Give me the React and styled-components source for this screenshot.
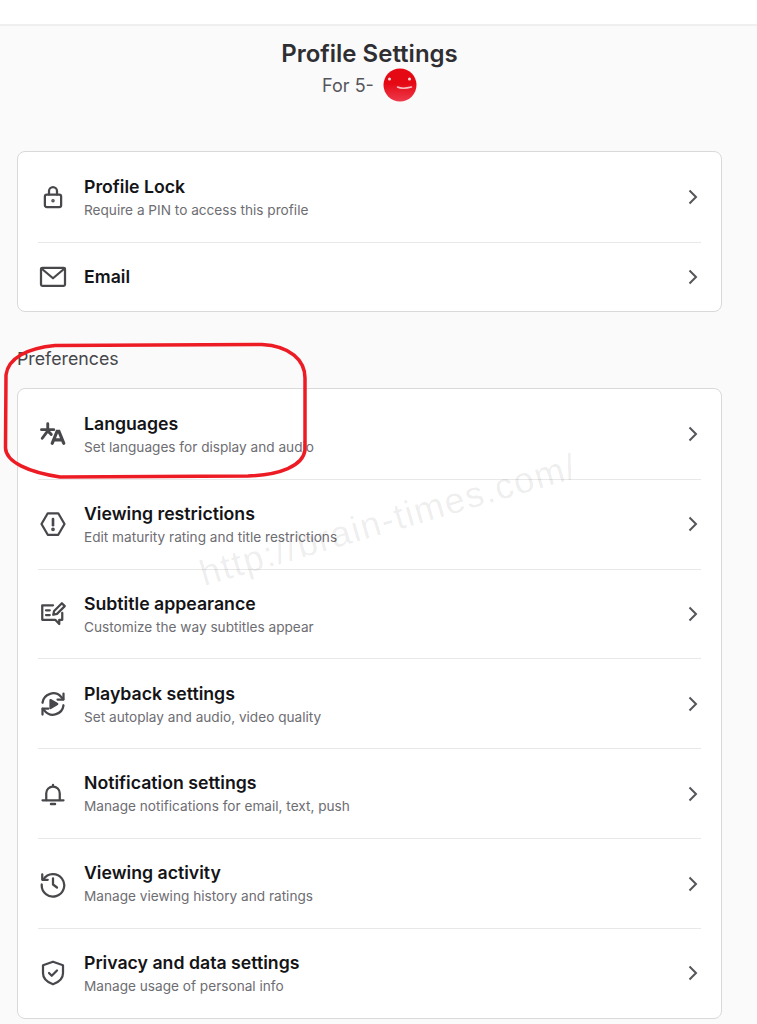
import styled, { createGlobalStyle } from "styled-components"

const GlobalStyle = createGlobalStyle`
  html, body {
    margin: 0;
    padding: 0;
    background: #fafafa;
  }
  body {
    font-family: Inter, "Liberation Sans", sans-serif;
  }
`

const Page = styled.div`
  position: relative;
  width: 757px;
  height: 1024px;
  overflow: hidden;
  background: #fafafa;
`

const TopBar = styled.div`
  height: 24px;
  background: #fff;
  border-bottom: 2px solid #efefef;
`

const Content = styled.main`
  width: 705px;
  margin-left: 17px;
`

const Header = styled.header`
  display: flex;
  flex-direction: column;
  align-items: center;
  padding-top: 12px;
  margin-bottom: 50px;
`

const Title = styled.h1`
  margin: 0;
  font-size: 24px;
  line-height: 32px;
  font-weight: 600;
  color: #2f2f33;
`

const ProfileLine = styled.div`
  display: flex;
  align-items: center;
  gap: 9px;
  height: 30px;
  margin-bottom: 1px;
  font-size: 18px;
  color: #55555a;
`

const Card = styled.section`
  background: #fff;
  border: 1px solid #d9d9d9;
  border-radius: 8px;
  padding: 0 20px;
  margin-bottom: ${(p) => p.$gap || 0}px;
`

const SectionLabel = styled.h2`
  margin: 0 0 17px;
  font-size: 17.800px;
  line-height: 23px;
  padding-bottom: 1px;
  font-weight: 400;
  color: #47474b;
`

const Row = styled.div`
  display: flex;
  align-items: center;
  height: ${(p) => p.$height || 89.83}px;
  box-sizing: border-box;
  border-top: ${(p) => (p.$first ? "none" : "1px solid #e8e8e8")};
`

const IconSlot = styled.div`
  width: 46px;
  flex: none;
  display: flex;
  color: #48484c;
`

const Text = styled.div`
  flex: 1;
  min-width: 0;
  margin-top: ${(p) => (p.$single ? -1 : 0.5)}px;
`

const RowTitle = styled.div`
  font-size: 17.700px;
  line-height: 24px;
  font-weight: 600;
  color: #141417;
`

const RowSub = styled.div`
  font-size: 13.640px;
  line-height: 20px;
  margin-top: 1px;
  color: #6d6d72;
`

const Chevron = styled.svg`
  flex: none;
  width: 24px;
  height: 24px;
  margin-right: -4px;
  color: #55555a;
`

const Watermark = styled.div`
  position: absolute;
  left: 193px;
  top: 498px;
  font-family: "Liberation Sans", Arial, sans-serif;
  font-size: 36px;
  letter-spacing: 1.500px;
  line-height: 44px;
  white-space: nowrap;
  color: rgba(0, 0, 0, 0.075);
  transform: rotate(-16.2deg);
  pointer-events: none;
`

const Annotation = styled.svg`
  position: absolute;
  left: 0;
  top: 335px;
  pointer-events: none;
`

function Icon({ children }) {
  return (
    <svg
      width="30"
      height="30"
      viewBox="0 0 24 24"
      fill="none"
      stroke="currentColor"
      strokeWidth="1.8"
      strokeLinecap="round"
      strokeLinejoin="round"
    >
      {children}
    </svg>
  )
}

const LockIcon = () => (
  <Icon>
    <rect x="5.500" y="10" width="13" height="10" rx="1.500" />
    <path d="M8.800 10V7.200a3.200 3.200 0 0 1 6.400 0V10" />
    <circle cx="12" cy="15" r="0.500" fill="currentColor" />
  </Icon>
)

const MailIcon = () => (
  <Icon>
    <rect x="2.400" y="4.600" width="19.200" height="14.400" rx="1" />
    <path d="M3 5.400l9 7.600 9-7.600" />
  </Icon>
)

const LanguageIcon = () => (
  <Icon>
    <path d="M2.800 8.500h9.800M7.800 3.800v6M7.800 9.500L3.400 15.400M7.800 9.500l2.800 2.800" strokeWidth="2.300" />
    <path d="M11.400 19.400L15.300 9.800h1.400L20.600 19.400M13 16.600h6" strokeWidth="2.600" strokeLinejoin="miter" />
  </Icon>
)

const HexAlertIcon = () => (
  <Icon>
    <path d="M7.800 3.400h8.400L21.200 12l-5 8.600H7.800L2.800 12z" />
    <path d="M12 8v5" strokeWidth="2.100" />
    <circle cx="12" cy="16.200" r="0.600" fill="currentColor" />
  </Icon>
)

const SubtitleIcon = () => (
  <Icon>
    <path d="M12 5H3.400v11.600h10.400l3.200 3.400v-3.400h2.400V11" />
    <path d="M6.400 9h3M6.400 12.800h3" />
    <path d="M12.200 12.600l.7-3 6.200-6.200 2.300 2.300-6.200 6.200z" />
  </Icon>
)

const PlaybackIcon = () => (
  <Icon>
    <path d="M3.600 11a8.600 8.600 0 0 1 15-4.600l1.600 1.800" />
    <path d="M20.400 3.600v4.800h-4.800" />
    <path d="M20.400 13a8.600 8.600 0 0 1-15 4.600l-1.600-1.800" />
    <path d="M3.600 20.400v-4.800h4.800" />
    <path d="M10 8.800l5.400 3.200-5.400 3.200z" fill="currentColor" />
  </Icon>
)

const BellIcon = () => (
  <Icon>
    <path d="M6.600 16.800v-5.400a5.400 5.400 0 0 1 10.800 0v5.400" />
    <path d="M3.600 17h16.800" />
    <path d="M10.400 20h3.200" strokeWidth="2" />
    <path d="M12 5.400V4.600" />
  </Icon>
)

const HistoryIcon = () => (
  <Icon>
    <path d="M4.400 8.200A9 9 0 1 1 3 12.400" />
    <path d="M3.400 4.200v4.400h4.400" />
    <path d="M12 7.400v5l3.200 2.400" />
  </Icon>
)

const ShieldIcon = () => (
  <Icon>
    <path d="M12 3l8 2.800v6.400c0 4.200-3.400 7.200-8 8.800-4.600-1.600-8-4.600-8-8.800V5.800z" />
    <path d="M8.800 12l2.200 2.200 4.200-4.200" />
  </Icon>
)

const ChevronIcon = () => (
  <Chevron viewBox="0 0 24 24" fill="none" stroke="currentColor" strokeWidth="2">
    <path d="M8.500 5.500L15 12l-6.500 6.500" />
  </Chevron>
)

const Avatar = () => (
  <svg width="34" height="34" viewBox="0 0 34 34">
    <defs>
      <linearGradient id="face" x1="0" y1="0" x2="0" y2="1">
        <stop offset="0.45" stopColor="#e50914" />
        <stop offset="1" stopColor="#ee3a4c" />
      </linearGradient>
    </defs>
    <circle cx="17" cy="17" r="16.500" fill="url(#face)" />
    <circle cx="6.500" cy="11" r="1.500" fill="#fbdcdc" />
    <circle cx="26.500" cy="11" r="1.500" fill="#fbdcdc" />
    <path d="M14.500 19c3 1.500 8 1.500 14 0" fill="none" stroke="#f9c0c4" strokeWidth="1.500" strokeLinecap="round" />
  </svg>
)

const card1 = [
  { icon: LockIcon, title: "Profile Lock", sub: "Require a PIN to access this profile", height: 90 },
  { icon: MailIcon, title: "Email", height: 69 },
]

const card2 = [
  { icon: LanguageIcon, title: "Languages", sub: "Set languages for display and audio" },
  { icon: HexAlertIcon, title: "Viewing restrictions", sub: "Edit maturity rating and title restrictions" },
  { icon: SubtitleIcon, title: "Subtitle appearance", sub: "Customize the way subtitles appear" },
  { icon: PlaybackIcon, title: "Playback settings", sub: "Set autoplay and audio, video quality" },
  { icon: BellIcon, title: "Notification settings", sub: "Manage notifications for email, text, push" },
  { icon: HistoryIcon, title: "Viewing activity", sub: "Manage viewing history and ratings" },
  { icon: ShieldIcon, title: "Privacy and data settings", sub: "Manage usage of personal info" },
]

function SettingsRow({ item, first }) {
  const Glyph = item.icon
  return (
    <Row $first={first} $height={item.height}>
      <IconSlot>
        <Glyph />
      </IconSlot>
      <Text $single={!item.sub}>
        <RowTitle>{item.title}</RowTitle>
        {item.sub && <RowSub>{item.sub}</RowSub>}
      </Text>
      <ChevronIcon />
    </Row>
  )
}

export default function App() {
  return (
    <Page>
      <GlobalStyle />
      <TopBar />
      <Content>
        <Header>
          <Title>Profile Settings</Title>
          <ProfileLine>
            For 5-
            <Avatar />
          </ProfileLine>
        </Header>

        <Card $gap={35}>
          {card1.map((item, i) => (
            <SettingsRow key={item.title} item={item} first={i === 0} />
          ))}
        </Card>

        <SectionLabel>Preferences</SectionLabel>
        <Card>
          {card2.map((item, i) => (
            <SettingsRow key={item.title} item={item} first={i === 0} />
          ))}
        </Card>
      </Content>

      <Watermark>http://brain-times.com/</Watermark>
      <Annotation width="320" height="150" viewBox="0 335 320 150" fill="none">
        <path
          d="M55 345.500 L262 344.500 C290 346 305 360 305 378 L305 450 C303 466 280 475 248 476 L60 477 C28 472 6 462 5.500 448 L6 375 C8 358 28 348 55 345.500 Z"
          stroke="#ed1c24"
          strokeWidth="3.500"
        />
      </Annotation>
    </Page>
  )
}
